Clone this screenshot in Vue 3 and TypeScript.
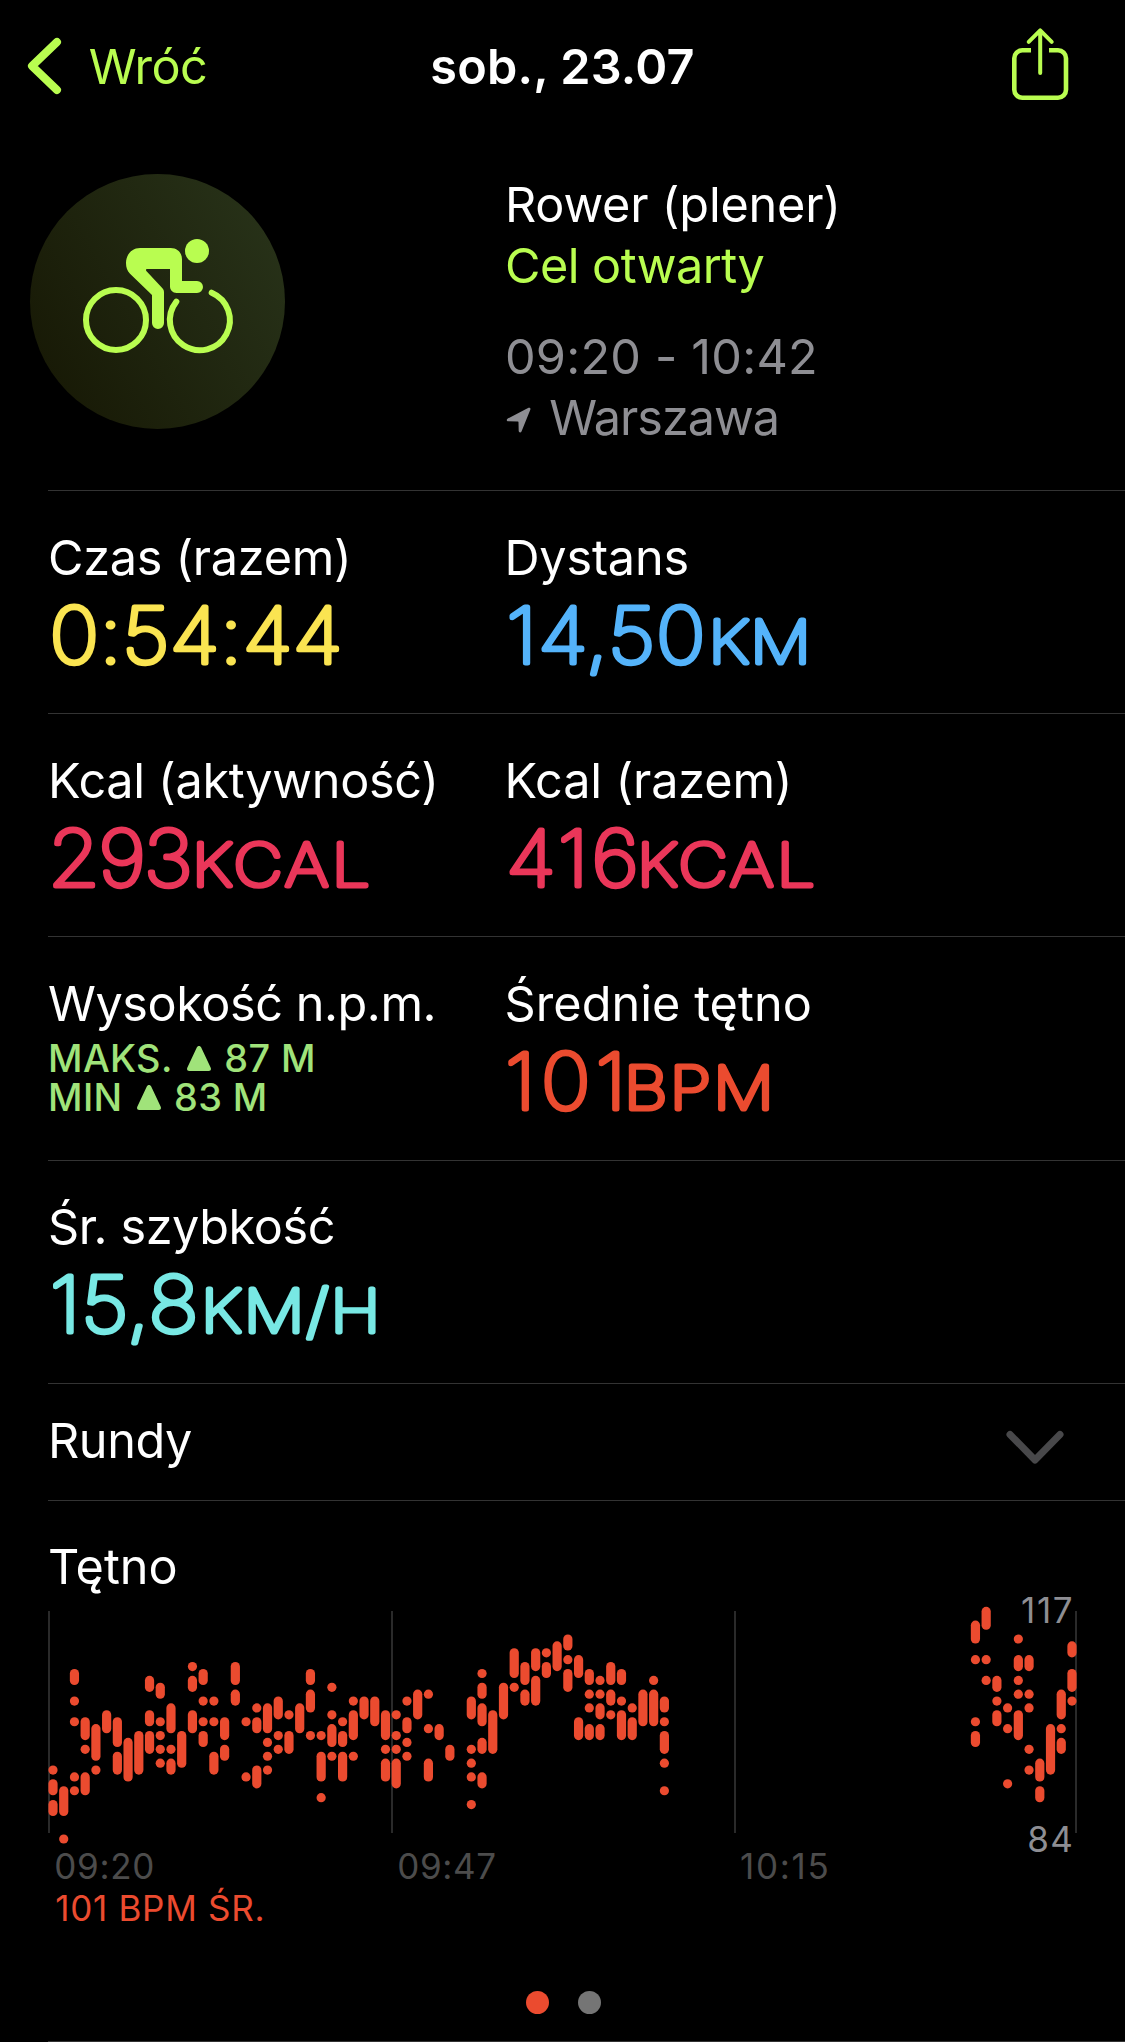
<script setup lang="ts">
interface Metric {
  label: string
  labelTracking: number
  value: string
  unit?: string
  color: string
  /** Left edge and tracking of the number, then of its unit. */
  x: number
  tracking: number
  unitX?: number
  unitTracking?: number
}

type Run = [from: number, to: number]

const rows: Metric[][] = [
  [
    { label: 'Czas (razem)', labelTracking: -0.3, value: '0:54:44', color: '#fae451', x: 1.5, tracking: 0.3 },
    { label: 'Dystans', labelTracking: -0.2, value: '14,50', unit: 'KM', color: '#54b3fa', x: 1.3, tracking: 0.8, unitX: 203.6, unitTracking: 1 },
  ],
  [
    { label: 'Kcal (aktywność)', labelTracking: -0.32, value: '293', unit: 'KCAL', color: '#ea3659', x: 0.1, tracking: -1.5, unitX: 144, unitTracking: 2.8 },
    { label: 'Kcal (razem)', labelTracking: -0.15, value: '416', unit: 'KCAL', color: '#ea3659', x: 1, tracking: 2.7, unitX: 132, unitTracking: 2.8 },
  ],
]

const average: Metric = { label: 'Średnie tętno', labelTracking: 0.05, value: '101', unit: 'BPM', color: '#eb4b2f', x: 0, tracking: 4.8, unitX: 119, unitTracking: 2 }
const speed: Metric = { label: 'Śr. szybkość', labelTracking: -0.42, value: '15,8', unit: 'KM/H', color: '#78e8e4', x: 1.8, tracking: 0.7, unitX: 153.1, unitTracking: 1.8 }

const numberAt = (m: Metric) => `translate(${m.x} 75) scale(1.08 1)`
const unitAt = (m: Metric) => `translate(${m.unitX} 75) scale(1.15 1)`

// Each column holds runs of samples, counted in beats below 113 BPM.
const samples: Record<number, Run[]> = {
  0: [[19, 19], [21, 22], [24, 25]],
  1: [[22, 25], [29, 29]],
  2: [[5, 6], [9, 9], [12, 12], [20, 20], [22, 22]],
  3: [[12, 14], [16, 16], [20, 22]],
  4: [[13, 17], [19, 19]],
  5: [[11, 13]],
  6: [[12, 15], [17, 19]],
  7: [[15, 20]],
  8: [[14, 19]],
  9: [[6, 7], [11, 12], [14, 16]],
  10: [[7, 8], [12, 12], [14, 14], [16, 16], [18, 18]],
  11: [[10, 13], [16, 16], [18, 19]],
  12: [[14, 18]],
  13: [[4, 4], [6, 7], [11, 13]],
  14: [[5, 6], [9, 9], [12, 12], [14, 15]],
  15: [[9, 9], [12, 12], [17, 19]],
  16: [[12, 14], [16, 17]],
  17: [[4, 6], [8, 9]],
  18: [[12, 12], [20, 20]],
  19: [[10, 10], [12, 13], [19, 21]],
  20: [[10, 13], [15, 15], [17, 17], [19, 19]],
  21: [[9, 11], [14, 14], [16, 16]],
  22: [[11, 11], [14, 16]],
  23: [[10, 13]],
  24: [[5, 6], [8, 10], [14, 14]],
  25: [[14, 14], [17, 20], [23, 23]],
  26: [[7, 7], [11, 11], [13, 15], [17, 17]],
  27: [[12, 12], [14, 15], [17, 20]],
  28: [[9, 9], [11, 14], [17, 17]],
  29: [[9, 11]],
  30: [[9, 12]],
  31: [[11, 14], [16, 16], [18, 20]],
  32: [[11, 11], [14, 14], [16, 16], [18, 21]],
  33: [[9, 9], [12, 13], [15, 15], [17, 17]],
  34: [[8, 11]],
  35: [[8, 8], [13, 13], [18, 20]],
  36: [[13, 14]],
  37: [[16, 17]],
  39: [[9, 11], [16, 16], [18, 18], [20, 20], [24, 24]],
  40: [[5, 5], [7, 8], [10, 12], [15, 16], [20, 21]],
  41: [[11, 16]],
  42: [[7, 11]],
  43: [[2, 5], [7, 7]],
  44: [[4, 6], [8, 9]],
  45: [[2, 4], [6, 9]],
  46: [[2, 2], [4, 5]],
  47: [[1, 4]],
  48: [[0, 1], [3, 3], [5, 7]],
  49: [[3, 5], [12, 14]],
  50: [[5, 6], [8, 8], [10, 10], [13, 14]],
  51: [[6, 6], [8, 8], [10, 11], [13, 14]],
  52: [[4, 6], [8, 9], [11, 11]],
  53: [[5, 6], [9, 9], [11, 14]],
  54: [[10, 10], [12, 14]],
  55: [[8, 12]],
  56: [[6, 6], [8, 12]],
  57: [[9, 10], [12, 12], [14, 16], [18, 18], [22, 22]],
  86: [[-2, 0], [3, 3], [12, 12], [14, 15]],
  87: [[-4, -2], [3, 3], [6, 6]],
  88: [[6, 7], [9, 9], [11, 12]],
  89: [[10, 10], [13, 13], [21, 21]],
  90: [[0, 0], [3, 4], [6, 6], [8, 8], [11, 14]],
  91: [[3, 4], [8, 8], [10, 10], [16, 16], [19, 19]],
  92: [[18, 20], [22, 23]],
  93: [[13, 19]],
  94: [[8, 11], [13, 13], [15, 16]],
  95: [[1, 2], [5, 7], [9, 9]],
}

const BEAT = 6.897
const bars = Object.entries(samples).flatMap(([column, runs]) =>
  runs.map(([from, to]) => ({
    x: 53 + Number(column) * 10.726 - 4.6,
    y: 49 + from * BEAT - 4.6,
    height: (to - from) * BEAT + 9.2,
  })),
)

const gridLines = [48, 391, 734, 1075]
</script>

<template>
  <main class="screen">
    <header class="bar">
      <button class="back" type="button">
        <svg width="40" height="64" viewBox="0 0 40 64"><path d="M32 8 7 32l25 24" /></svg>
        <span>Wróć</span>
      </button>
      <h1>sob., 23.07</h1>
      <svg class="share" width="66" height="80" viewBox="0 0 66 80">
        <path d="M27 24.300H18.300a8 8 0 0 0-8 8v31.500a8 8 0 0 0 8 8H54a8 8 0 0 0 8-8V32.300a8 8 0 0 0-8-8H45" />
        <path class="arrow" d="M36.200 47V5M24.700 15.800 36.200 4.300l11.500 11.500" />
      </svg>
    </header>

    <section class="summary">
      <div class="badge">
        <svg viewBox="30 42 765 765">
          <circle cx="288" cy="480" r="90" />
          <path class="wheel" d="M575 398a90 90 0 1 1-106 27" />
          <circle class="solid" cx="531" cy="273" r="36" />
          <path class="solid" d="M360 264h92c20 0 34 14 34 34v65h45a18 18 0 0 1 0 36h-61c-12 0-20-8-20-20v-52h-68c-4 0-5 3-3 6l47 50c5 5 6 8 6 15v91a18 18 0 0 1-36 0v-84l-66-64c-8-8-12-18-12-32 0-26 18-45 42-45z" />
        </svg>
      </div>
      <div class="facts">
        <p class="kind">Rower (plener)</p>
        <p class="goal">Cel otwarty</p>
        <p class="time">09:20 - 10:42</p>
        <p class="place">
          <svg width="26" height="28" viewBox="0 0 26 28"><path d="M22.500 1.800c1.300-.6 2.400.5 1.800 1.900L15.500 25.500c-.6 1.500-2.700 1.300-2.800-.4l-.2-8.700c0-.7-.2-.9-.9-.9l-9.400-.2c-1.700 0-2-2-.4-2.800z" /></svg>
          <span>Warszawa</span>
        </p>
      </div>
    </section>

    <section v-for="(row, i) in rows" :key="i" class="metrics">
      <div v-for="m in row" :key="m.label" class="metric">
        <h2 :style="{ letterSpacing: m.labelTracking + 'px' }">{{ m.label }}</h2>
        <svg class="value" width="400" height="110" :style="{ color: m.color }">
          <text :transform="numberAt(m)" :letter-spacing="m.tracking">{{ m.value }}</text>
          <text v-if="m.unit" class="unit" :transform="unitAt(m)" :letter-spacing="m.unitTracking">{{ m.unit }}</text>
        </svg>
      </div>
    </section>

    <section class="metrics tall">
      <div class="metric">
        <h2 class="tight">Wysokość n.p.m.</h2>
        <p class="altitude">
          <span>MAKS.</span>
          <svg width="24" height="25" viewBox="0 0 24 25"><path d="M9.800 1.600c1-2 3.400-2 4.400 0l9.400 20c.9 1.900.1 3.400-1.900 3.400H2.300c-2 0-2.800-1.500-1.900-3.400z" /></svg>
          <span>87 M</span>
        </p>
        <p class="altitude">
          <span>MIN</span>
          <svg width="24" height="25" viewBox="0 0 24 25"><path d="M9.800 1.600c1-2 3.400-2 4.400 0l9.400 20c.9 1.900.1 3.400-1.900 3.400H2.300c-2 0-2.800-1.500-1.900-3.400z" /></svg>
          <span>83 M</span>
        </p>
      </div>
      <div class="metric">
        <h2 :style="{ letterSpacing: average.labelTracking + 'px' }">{{ average.label }}</h2>
        <svg class="value" width="400" height="110" :style="{ color: average.color }">
          <text :transform="numberAt(average)" :letter-spacing="average.tracking">{{ average.value }}</text>
          <text class="unit" :transform="unitAt(average)" :letter-spacing="average.unitTracking">{{ average.unit }}</text>
        </svg>
      </div>
    </section>

    <section class="metrics last">
      <div class="metric">
        <h2 :style="{ letterSpacing: speed.labelTracking + 'px' }">{{ speed.label }}</h2>
        <svg class="value" width="400" height="110" :style="{ color: speed.color }">
          <text :transform="numberAt(speed)" :letter-spacing="speed.tracking">{{ speed.value }}</text>
          <text class="unit" :transform="unitAt(speed)" :letter-spacing="speed.unitTracking">{{ speed.unit }}</text>
        </svg>
      </div>
    </section>

    <section class="laps">
      <h2>Rundy</h2>
      <svg width="60" height="40" viewBox="0 0 60 40"><path d="M5 6.500 30 32 55 6.500" /></svg>
    </section>

    <section class="heart">
      <h2>Tętno</h2>
      <svg class="chart" width="1125" height="345" viewBox="0 0 1125 345">
        <rect v-for="x in gridLines" :key="x" class="grid" :x="x" y="21" width="2" height="222" />
        <rect v-for="(b, i) in bars" :key="i" class="pulse" :x="b.x" :y="b.y" width="9.2" :height="b.height" rx="4.600" />
        <text class="bound" x="1021" y="32.500" letter-spacing="1.700">117</text>
        <text class="bound" x="1027.300" y="261.500" letter-spacing="1.300">84</text>
        <text class="tick" x="54.300" y="289" letter-spacing=".7">09:20</text>
        <text class="tick" x="397.300" y="289" letter-spacing=".6">09:47</text>
        <text class="tick" x="740" y="289" letter-spacing="1.700">10:15</text>
        <text class="mean" x="55.300" y="330.500" letter-spacing=".7">101 BPM ŚR.</text>
      </svg>
      <div class="pager"><i class="on"></i><i></i></div>
    </section>
  </main>
</template>

<style>
body {
  background: #000;
}
</style>

<style scoped>
.screen {
  display: flex;
  flex-direction: column;
  box-sizing: border-box;
  width: 1125px;
  height: 2042px;
  overflow: hidden;
  background: #000;
  color: #fff;
  font: 400 48.6px/61px Inter, "Liberation Sans", sans-serif;
}

h1,
h2,
p {
  margin: 0;
  font-size: inherit;
  font-weight: 400;
  white-space: nowrap;
}

svg {
  display: block;
  flex: none;
}

.bar {
  display: grid;
  grid-template-columns: 1fr auto 1fr;
  align-items: center;
  height: 132px;
  color: #b9fd50;
}

.bar h1 {
  color: #fff;
  font-weight: 600;
  letter-spacing: 0.2px;
}

.back {
  display: flex;
  align-items: center;
  gap: 23.7px;
  padding: 0 0 0 25px;
  border: 0;
  background: none;
  color: inherit;
  font: inherit;
  letter-spacing: -0.5px;
}

.back svg,
.share {
  fill: none;
  stroke: currentColor;
  stroke-width: 8;
  stroke-linecap: round;
  stroke-linejoin: round;
}

.share {
  justify-self: end;
  margin-right: 55px;
  stroke-width: 4.6;
  stroke-linecap: butt;
}

.share .arrow {
  stroke-width: 4;
  stroke-linecap: round;
}

.summary {
  display: flex;
  box-sizing: border-box;
  height: 359px;
  margin-left: 48px;
  padding-top: 42px;
  border-bottom: 1px solid #333;
}

.badge {
  width: 255px;
  height: 255px;
  margin-left: -18px;
  border-radius: 50%;
  background: linear-gradient(60deg, #181a06 12%, #273118 88%);
}

.badge svg {
  width: 100%;
  height: 100%;
  fill: none;
  stroke: #b9fd50;
  stroke-width: 18;
  stroke-linecap: round;
}

.badge .solid {
  fill: #b9fd50;
  stroke: none;
}

.facts {
  margin-left: 220px;
}

.kind {
  letter-spacing: -0.2px;
}

.goal {
  color: #b9fd50;
  letter-spacing: -0.55px;
}

.time {
  margin-top: 30px;
  color: #8e8e93;
  letter-spacing: 0.2px;
}

.place {
  display: flex;
  gap: 17px;
  color: #8e8e93;
  letter-spacing: -1px;
}

.place svg {
  margin-top: 19px;
  margin-left: 1.3px;
  fill: currentColor;
}

.metrics {
  display: grid;
  grid-template-columns: 456.5px 1fr;
  box-sizing: border-box;
  height: 223px;
  margin-left: 48px;
  padding-top: 36px;
  border-bottom: 1px solid #333;
}

.metrics.tall {
  height: 224px;
}

.metrics.last {
  padding-top: 35px;
}

.metric h2.tight {
  letter-spacing: -0.45px;
}

.value {
  overflow: visible;
  fill: currentColor;
  stroke: currentColor;
  stroke-width: 5;
  stroke-linejoin: round;
  font-size: 77.5px;
  font-weight: 100;
}

.unit {
  font-size: 59px;
}

.altitude {
  display: flex;
  color: #a0e37a;
  font-size: 37.8px;
  font-weight: 450;
  line-height: 39px;
  letter-spacing: 0.4px;
}

h2 + .altitude {
  margin-top: 5px;
}

.altitude svg {
  margin: 7px 13.5px 0 14px;
  fill: currentColor;
}

.laps {
  display: flex;
  justify-content: space-between;
  box-sizing: border-box;
  height: 117px;
  margin-left: 48px;
  padding: 26px 60px 0 0;
  border-bottom: 1px solid #333;
  letter-spacing: -0.4px;
}

.laps svg {
  margin-top: 18px;
  fill: none;
  stroke: #48484a;
  stroke-width: 7;
  stroke-linecap: round;
  stroke-linejoin: round;
}

.heart {
  display: flex;
  flex-direction: column;
  box-sizing: border-box;
  height: 541px;
  margin-left: 48px;
  padding-top: 35px;
  border-bottom: 1px solid #333;
}

.chart {
  margin: -7px 0 0 -48px;
  font-size: 35px;
}

.grid {
  fill: #2a2a2a;
}

.pulse,
.mean {
  fill: #eb4b2f;
}

.bound {
  fill: #8e8e93;
}

.tick {
  fill: #4c4c4c;
}

.pager {
  display: flex;
  gap: 29px;
  margin: 56px 0 0 478px;
}

.pager i {
  width: 23px;
  height: 23px;
  border-radius: 50%;
  background: #757575;
}

.pager .on {
  background: #eb4b2f;
}
</style>
